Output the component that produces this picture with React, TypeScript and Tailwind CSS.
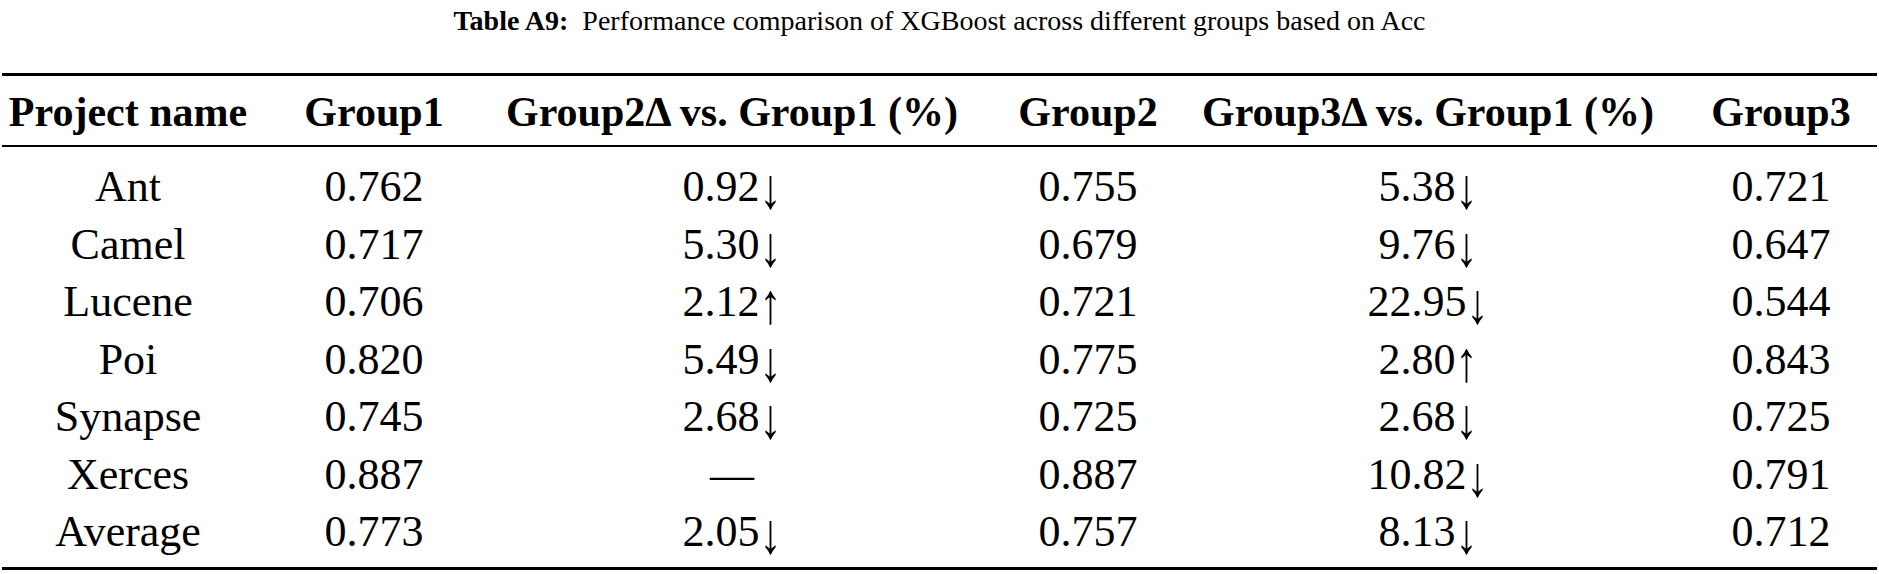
import React from "react";

const header = [
  "Project name",
  "Group1",
  "Group2\u0394 vs. Group1 (%)",
  "Group2",
  "Group3\u0394 vs. Group1 (%)",
  "Group3",
];

const rows: string[][] = [
  ["Ant", "0.762", "0.92\u2193", "0.755", "5.38\u2193", "0.721"],
  ["Camel", "0.717", "5.30\u2193", "0.679", "9.76\u2193", "0.647"],
  ["Lucene", "0.706", "2.12\u2191", "0.721", "22.95\u2193", "0.544"],
  ["Poi", "0.820", "5.49\u2193", "0.775", "2.80\u2191", "0.843"],
  ["Synapse", "0.745", "2.68\u2193", "0.725", "2.68\u2193", "0.725"],
  ["Xerces", "0.887", "\u2014", "0.887", "10.82\u2193", "0.791"],
  ["Average", "0.773", "2.05\u2193", "0.757", "8.13\u2193", "0.712"],
];

const cellCls = (i: number) =>
  i === 5
    ? "flex justify-center whitespace-nowrap pl-[35px]"
    : "flex justify-center whitespace-nowrap";

function Value({ text }: { text: string }) {
  const last = text.slice(-1);
  if (last === "\u2193" || last === "\u2191") {
    return (
      <span>
        {text.slice(0, -1)}
        <span className="inline-block leading-none scale-y-[1.3] translate-y-[3px]">{last}</span>
      </span>
    );
  }
  return <span>{text}</span>;
}

export default function App() {
  return (
    <div className="w-[1879px] h-[574px] bg-white text-black font-['Liberation_Serif',serif] overflow-hidden pt-[1px]">
      <div className="text-center text-[28px] leading-[40px] mb-[32px] whitespace-nowrap">
        <span className="font-bold">Table A9:</span>
        <span>{"\u00a0\u00a0"}Performance comparison of XGBoost across different groups based on Acc</span>
      </div>
      <div className="mx-[2px] border-t-[3px] border-b-[3px] border-black">
        <div className="grid grid-cols-[252px_240px_476px_236px_444px_227px] h-[71px] pt-[2px] text-[42px] leading-[69px] font-bold border-b-[2px] border-black">
          {header.map((h, i) => (
            <div key={i} className={cellCls(i)}>
              <span>{h}</span>
            </div>
          ))}
        </div>
        <div className="pt-[11px] pb-[6px] text-[44px]">
          {rows.map((r, ri) => (
            <div key={ri} className="grid grid-cols-[252px_240px_476px_236px_444px_227px] h-[57.5px] leading-[57.5px]">
              {r.map((c, i) => (
                <div key={i} className={cellCls(i)}>
                  <Value text={c} />
                </div>
              ))}
            </div>
          ))}
        </div>
      </div>
    </div>
  );
}
